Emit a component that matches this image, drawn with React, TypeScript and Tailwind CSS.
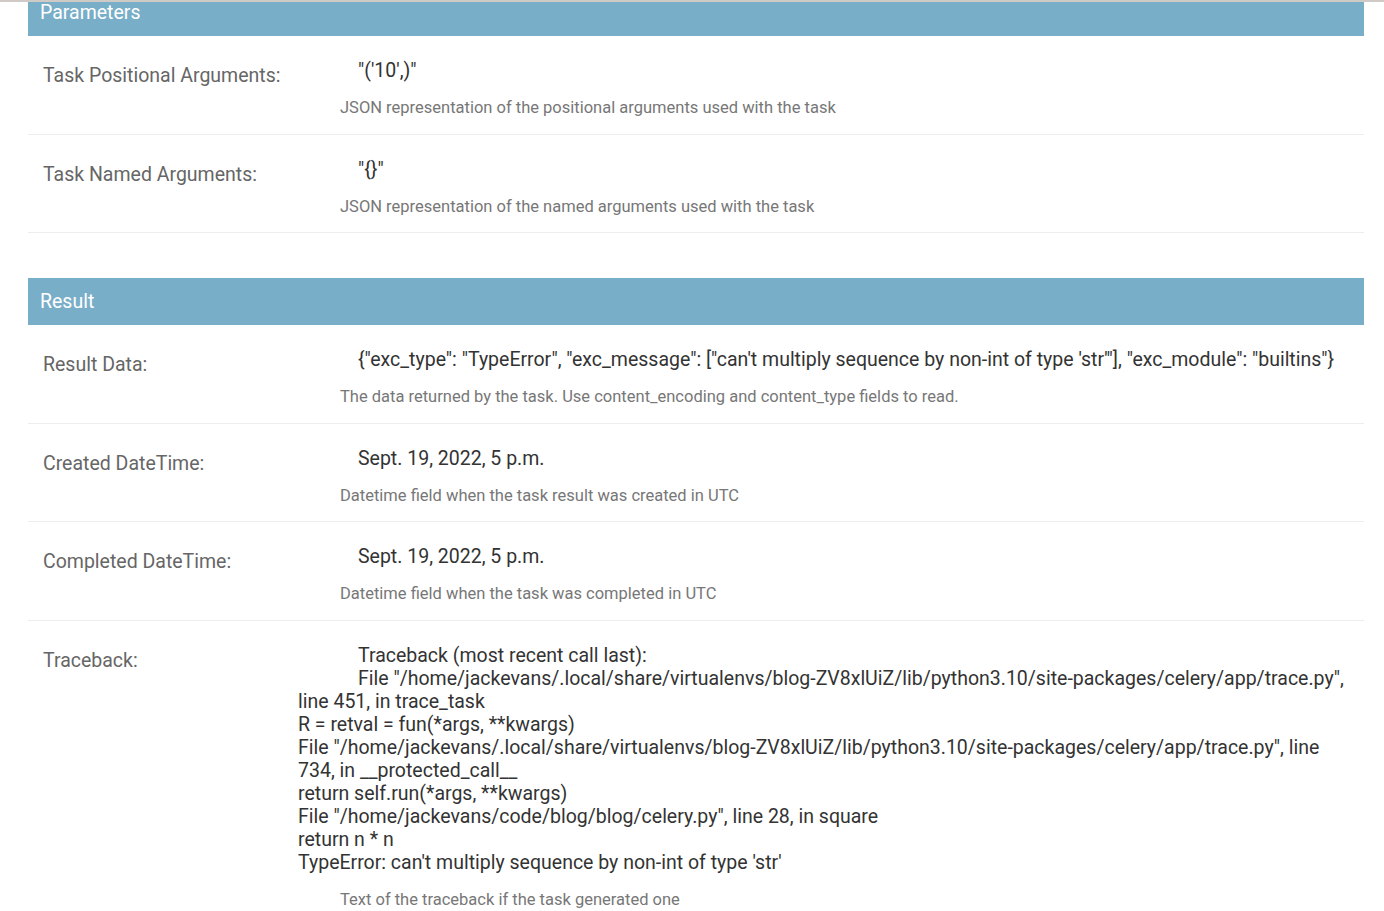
import React from "react";

type Field = {
  label: string;
  value: React.ReactNode;
  help: string;
};

const traceback = [
  "Traceback (most recent call last):",
  'File "/home/jackevans/.local/share/virtualenvs/blog-ZV8xlUiZ/lib/python3.10/site-packages/celery/app/trace.py", line 451, in trace_task',
  "R = retval = fun(*args, **kwargs)",
  'File "/home/jackevans/.local/share/virtualenvs/blog-ZV8xlUiZ/lib/python3.10/site-packages/celery/app/trace.py", line 734, in __protected_call__',
  "return self.run(*args, **kwargs)",
  'File "/home/jackevans/code/blog/blog/celery.py", line 28, in square',
  "return n * n",
  "TypeError: can't multiply sequence by non-int of type 'str'",
];

const parameters: Field[] = [
  {
    label: "Task Positional Arguments:",
    value: "\"('10',)\"",
    help: "JSON representation of the positional arguments used with the task",
  },
  {
    label: "Task Named Arguments:",
    value: '"{}"',
    help: "JSON representation of the named arguments used with the task",
  },
];

const result: Field[] = [
  {
    label: "Result Data:",
    value:
      '{"exc_type": "TypeError", "exc_message": ["can\'t multiply sequence by non-int of type \'str\'"], "exc_module": "builtins"}',
    help: "The data returned by the task. Use content_encoding and content_type fields to read.",
  },
  {
    label: "Created DateTime:",
    value: "Sept. 19, 2022, 5 p.m.",
    help: "Datetime field when the task result was created in UTC",
  },
  {
    label: "Completed DateTime:",
    value: "Sept. 19, 2022, 5 p.m.",
    help: "Datetime field when the task was completed in UTC",
  },
  {
    label: "Traceback:",
    value: traceback.map((l, i) => (
      <React.Fragment key={i}>
        {l}
        {i < traceback.length - 1 && <br />}
      </React.Fragment>
    )),
    help: "Text of the traceback if the task generated one",
  },
];

function Row({ f }: { f: Field }) {
  return (
    <div className="flex pt-[23px] pb-[16.5px] border-b border-[#eeeeee]">
      <div className="w-[270px] shrink-0 pl-[15px] pt-[5px] text-[19.5px] leading-[23px] text-[#666666]">
        {f.label}
      </div>
      <div className="flex-1 min-w-0 pr-[15px]">
        <div className="text-[19.5px] leading-[23px] text-[#333333]">
          <span className="float-left w-[60px] h-[30px]" />
          {f.value}
        </div>
        <div className="mt-[16px] ml-[42px] text-[16.5px] leading-[19px] text-[#777777]">
          {f.help}
        </div>
      </div>
    </div>
  );
}

function Module({ title, fields }: { title: string; fields: Field[] }) {
  return (
    <div>
      <h2 className="bg-[#79aec8] text-white text-[19.5px] leading-[23px] py-[12px] px-[12px] font-normal">
        {title}
      </h2>
      <div>
        {fields.map((f, i) => (
          <Row key={i} f={f} />
        ))}
      </div>
    </div>
  );
}

export default function App() {
  return (
    <div
      className="relative min-h-[911px] bg-white overflow-hidden"
      style={{ fontFamily: 'Roboto, "Liberation Sans", Arial, sans-serif' }}
    >
      <div className="absolute top-0 left-0 right-0 h-[2px] bg-[#cfcac6] z-10" />
      <div className="pl-[28px] pr-[20px] -mt-[11px] flex flex-col gap-[45px]">
        <Module title="Parameters" fields={parameters} />
        <Module title="Result" fields={result} />
      </div>
    </div>
  );
}
